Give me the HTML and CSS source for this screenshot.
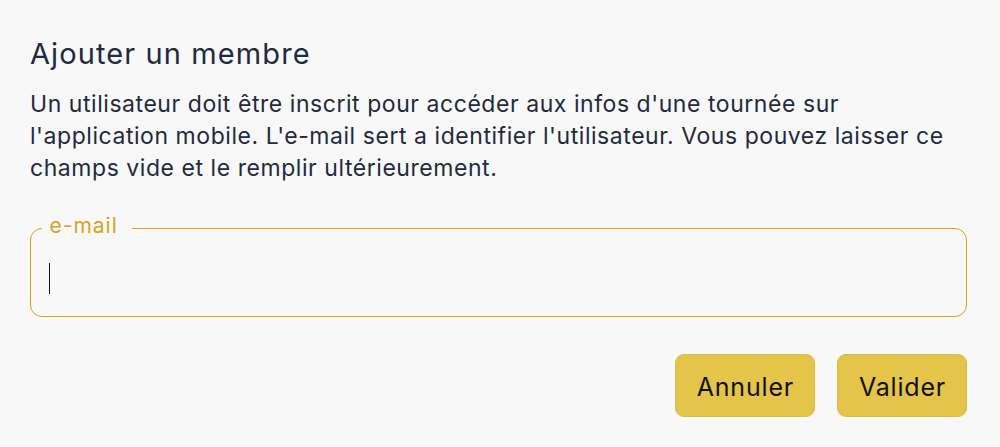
FILE: index.html
```html
<!DOCTYPE html>
<html lang="fr">
<head>
<meta charset="utf-8">
<title>Ajouter un membre</title>
<link rel="stylesheet" href="styles.css">
</head>
<body>
<div class="dialog">
  <h1 class="title">Ajouter un membre</h1>
  <p class="desc">Un utilisateur doit être inscrit pour accéder aux infos d'une tournée sur l'application mobile. L'e-mail sert a identifier l'utilisateur. Vous pouvez laisser ce champs vide et le remplir ultérieurement.</p>
  <fieldset class="field">
    <legend class="field-label">e-mail</legend>
    <div class="field-input"><span class="caret"></span></div>
  </fieldset>
  <div class="actions">
    <button class="btn" type="button">Annuler</button>
    <button class="btn" type="button">Valider</button>
  </div>
</div>
</body>
</html>
```

FILE: styles.css
```css
html, body {
  margin: 0;
  padding: 0;
  background: #f8f8f8;
}
body {
  font-family: Inter, "Noto Sans", sans-serif;
  color: #1f2b3d;
}
.dialog {
  padding: 36px 33px 0 30px;
}
.title {
  margin: 0;
  font-size: 29px;
  font-weight: 400;
  letter-spacing: 1.1px;
  line-height: 36px;
}
.desc {
  margin: 16px 0 0;
  font-size: 23px;
  letter-spacing: 0.55px;
  line-height: 32px;
}
.field {
  margin: 32px 0 0;
  padding: 0 10px 0 10.5px;
  border: 1.5px solid #d6a40b;
  border-radius: 12px;
}
.field-label {
  padding: 0 14px 4px 8px;
  color: #d4a526;
  font-size: 21px;
  letter-spacing: 1px;
  line-height: 20px;
}
.field-input {
  display: flex;
  align-items: center;
  height: 76px;
  padding: 0 0 0 7px;
}
.caret {
  display: block;
  width: 1.5px;
  height: 31px;
  background: #111;
}
.actions {
  display: flex;
  justify-content: flex-end;
  gap: 22px;
  margin-top: 37px;
}
.btn {
  box-sizing: border-box;
  font-family: inherit;
  font-size: 25px;
  letter-spacing: 0.8px;
  color: #111;
  background: #e5c44a;
  border: 1px solid #ddbc44;
  border-radius: 9px;
  height: 63px;
  padding: 2px 20px 0 21px;
}
```
